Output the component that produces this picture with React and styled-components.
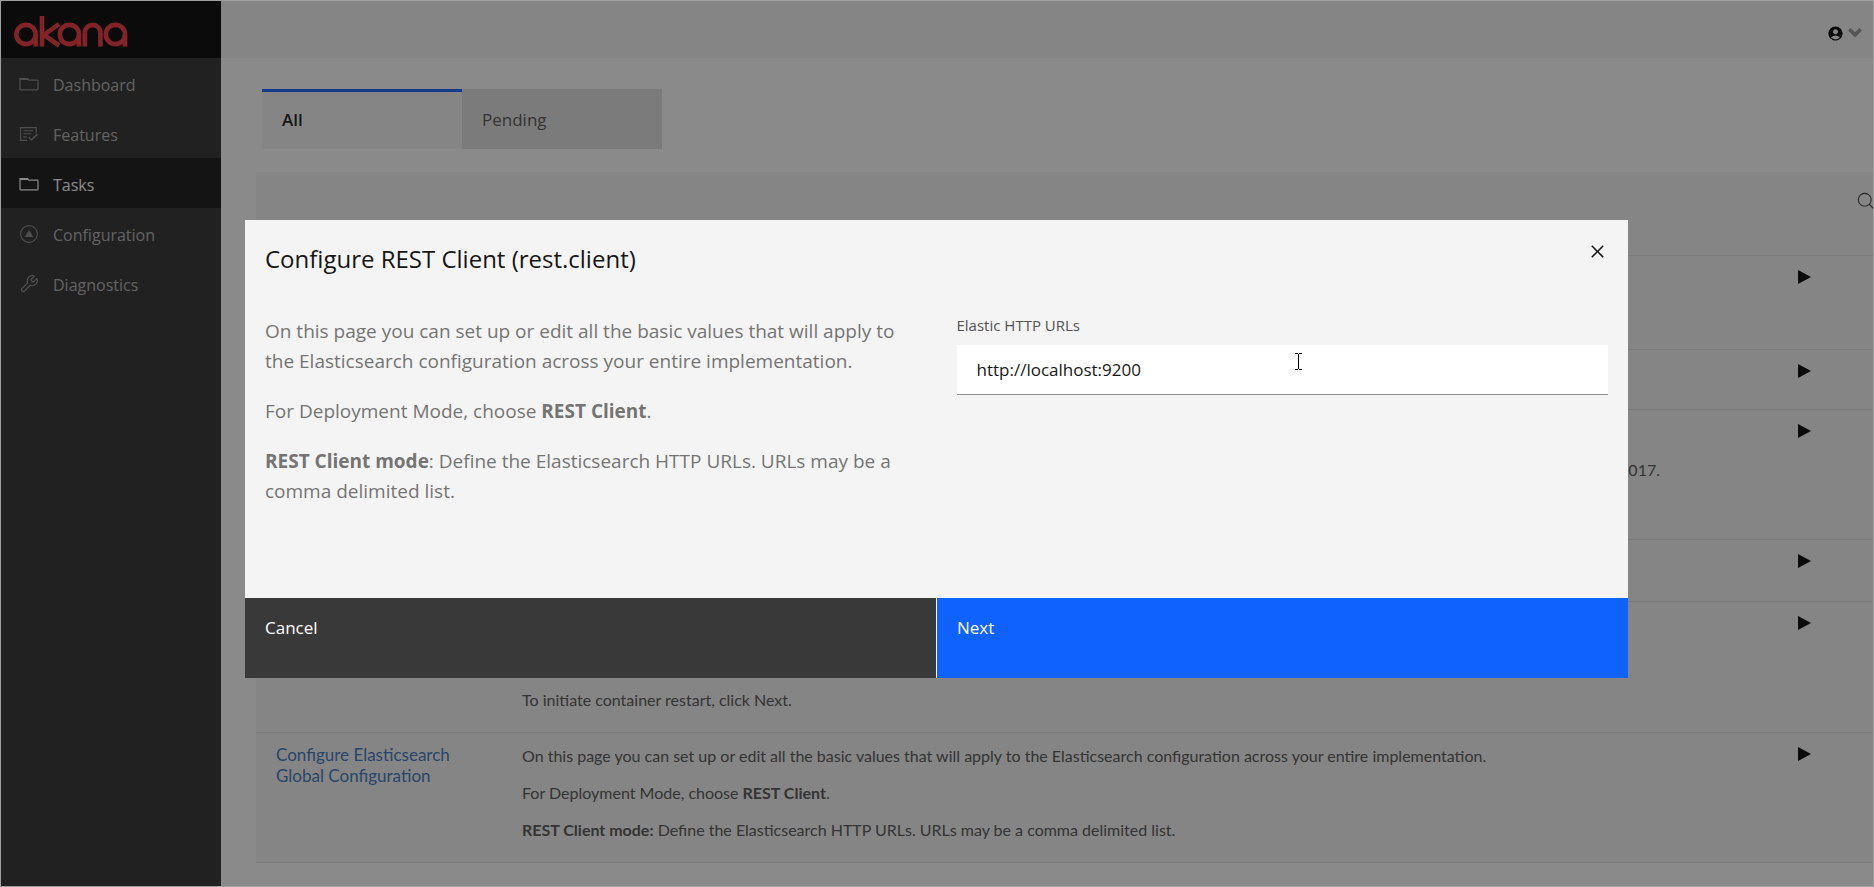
import React, { useState } from 'react';
import styled, { createGlobalStyle } from 'styled-components';
import { MdAccountCircle } from 'react-icons/md';
import { LuWrench } from 'react-icons/lu';

const GlobalStyle = createGlobalStyle`
    * {
        box-sizing: border-box;
    }

    body {
        margin: 0;
        font-family: 'Open Sans', 'Noto Sans', sans-serif;
        background: #fff;
    }

    button {
        font-family: inherit;
        border: none;
        cursor: pointer;
    }
`;

const FolderIcon = () => (
    <svg width='20' height='20' viewBox='0 0 20 20' fill='none' stroke='currentColor' strokeWidth='1.2'>
        <path d='M1 15V4.6h7.4l1.4 1.6h8.4c.5 0 .8.3.8.8v8c0 .6-.3.9-.8.9H1.9c-.6 0-.9-.3-.9-.9z' />
        <path d='M1.4 5.4h8' />
    </svg>
);

const FeaturesIcon = () => (
    <svg width='20' height='20' viewBox='0 0 20 20' fill='none' stroke='currentColor' strokeWidth='1.1'>
        <path d='M8 16.4H1.6V3.6h15.6v6' />
        <path d='M4.4 6.7h9.6M4.4 9.8h8M4.4 12.9h3.4' />
        <path d='M9.8 13.2l2.6 2.6 6-5.4' strokeWidth='1.5' />
    </svg>
);

const ConfigurationIcon = () => (
    <svg width='20' height='20' viewBox='0 0 20 20' fill='none' stroke='currentColor' strokeWidth='1.1'>
        <circle cx='10' cy='10' r='8.4' />
        <path d='M10 6l4.4 7H5.6z' fill='currentColor' stroke='none' />
    </svg>
);

const DiagnosticsIcon = () => <LuWrench size={20} strokeWidth={1.4} />;

const Logo = () => (
    <svg width='116' height='34' viewBox='0 0 116 34' fill='none' stroke='#f03038' strokeWidth='4.6' role='img' aria-label='akana'>
        <circle cx='13' cy='20.5' r='9.6' />
        <line x1='22.6' y1='20.5' x2='22.6' y2='32.5' />
        <line x1='29' y1='2' x2='29' y2='32.5' />
        <polyline points='46,10 31,21 46,31.5' />
        <circle cx='56.4' cy='20.5' r='9.6' />
        <line x1='66' y1='20.5' x2='66' y2='32.5' />
        <circle cx='79.6' cy='18.7' r='7.8' pathLength='2' strokeDasharray='1 1' strokeDashoffset='1' />
        <line x1='71.8' y1='18.5' x2='71.8' y2='32.5' />
        <line x1='87.4' y1='18.5' x2='87.4' y2='32.5' />
        <circle cx='102.4' cy='20.5' r='9.6' />
        <line x1='112' y1='20.5' x2='112' y2='32.5' />
    </svg>
);

const navItems = [
    { label: 'Dashboard', icon: <FolderIcon /> },
    { label: 'Features', icon: <FeaturesIcon /> },
    { label: 'Tasks', icon: <FolderIcon />, active: true },
    { label: 'Configuration', icon: <ConfigurationIcon /> },
    { label: 'Diagnostics', icon: <DiagnosticsIcon /> },
];

const tasks = [
    { id: 1, height: 94 },
    { id: 2, height: 60 },
    { id: 3, height: 130, valign: 'middle', align: 'right', text: ['2017.'] },
    { id: 4, height: 62 },
    { id: 5, height: 131, valign: 'bottom', text: ['To initiate container restart, click Next.'] },
    {
        id: 6,
        height: 130,
        name: 'Configure Elasticsearch Global Configuration',
        text: [
            'On this page you can set up or edit all the basic values that will apply to the Elasticsearch configuration across your entire implementation.',
            <>For Deployment Mode, choose <b>REST Client</b>.</>,
            <><b>REST Client mode:</b> Define the Elasticsearch HTTP URLs. URLs may be a comma delimited list.</>,
        ],
    },
];

const App = () => {
    const [tab, setTab] = useState('All');
    const [urls, setUrls] = useState('http://localhost:9200');

    return (
        <Shell>
            <GlobalStyle />
            {/* sidebar start */}
            <Sidebar>
                <LogoBar>
                    <Logo />
                </LogoBar>
                <nav>
                    {navItems.map(({ label, icon, active }) => (
                        <NavItem key={label} href='#' $active={active}>
                            {icon}
                            <span>{label}</span>
                        </NavItem>
                    ))}
                </nav>
            </Sidebar>
            {/* sidebar end */}

            {/* tasks page start */}
            <Page>
                <TopBar>
                    <UserButton type='button' aria-label='Account'>
                        <MdAccountCircle size={17} />
                        <svg width='14' height='12' viewBox='0 0 14 12'>
                            <path d='M2.6 0L7 4.2 11.4 0 14 2.6 7 9.6 0 2.6z' fill='#969696' />
                        </svg>
                    </UserButton>
                </TopBar>
                <Tabs role='tablist'>
                    {['All', 'Pending'].map((name) => (
                        <Tab
                            key={name}
                            type='button'
                            role='tab'
                            aria-selected={tab === name}
                            $active={tab === name}
                            onClick={() => setTab(name)}
                        >
                            {name}
                        </Tab>
                    ))}
                </Tabs>
                <TableArea>
                    <Toolbar>
                        <SearchButton type='button' aria-label='Search'>
                            <svg width='20' height='20' viewBox='0 0 32 32' fill='currentColor'>
                                <path d='M30 28.6L22.4 21A11 11 0 1 0 21 22.4L28.6 30zM4.6 14a9.4 9.4 0 1 1 9.4 9.4A9.4 9.4 0 0 1 4.6 14z' />
                            </svg>
                        </SearchButton>
                    </Toolbar>
                    <TaskTable>
                        <colgroup>
                            <NameCol />
                            <col />
                            <RunCol />
                        </colgroup>
                        <tbody>
                            {tasks.map(({ id, name, text = [], height, valign, align }) => (
                                <TaskRow key={id} $height={height}>
                                    <TaskCell>{name && <TaskLink href='#'>{name}</TaskLink>}</TaskCell>
                                    <DescriptionCell $valign={valign} $align={align}>
                                        {text.map((line, i) => <p key={i}>{line}</p>)}
                                    </DescriptionCell>
                                    <TaskCell>
                                        <RunButton type='button' aria-label='Run task'>
                                            <svg width='13' height='14' viewBox='0 0 13 14'>
                                                <path d='M0 0l13 7-13 7z' fill='currentColor' />
                                            </svg>
                                        </RunButton>
                                    </TaskCell>
                                </TaskRow>
                            ))}
                        </tbody>
                    </TaskTable>
                </TableArea>
            </Page>
            {/* tasks page end */}

            {/* modal start */}
            <Overlay>
                <Modal role='dialog' aria-labelledby='modal-title'>
                    <ModalHeader>
                        <h2 id='modal-title'>Configure REST Client (rest.client)</h2>
                        <CloseButton type='button' aria-label='Close'>
                            <svg width='25' height='25' viewBox='0 0 32 32' fill='currentColor'>
                                <path d='M24 9.4L22.6 8 16 14.6 9.4 8 8 9.4l6.6 6.6L8 22.6 9.4 24l6.6-6.6 6.6 6.6 1.4-1.4-6.6-6.6z' />
                            </svg>
                        </CloseButton>
                    </ModalHeader>
                    <ModalBody>
                        <Help>
                            <p>
                                On this page you can set up or edit all the basic values that will apply to
                                the Elasticsearch configuration across your entire implementation.
                            </p>
                            <p>For Deployment Mode, choose <b>REST Client</b>.</p>
                            <p>
                                <b>REST Client mode</b>: Define the Elasticsearch HTTP URLs. URLs may be a
                                comma delimited list.
                            </p>
                        </Help>
                        <Field>
                            <label htmlFor='urls'>Elastic HTTP URLs</label>
                            <InputWrap>
                                <input id='urls' type='text' value={urls} onChange={(e) => setUrls(e.target.value)} />
                                <Caret width='7' height='17' viewBox='0 0 7 17' fill='none' stroke='#000'>
                                    <path d='M0 .5h3M4 .5h3M3.5 1v15M0 16.5h3M4 16.5h3' />
                                </Caret>
                            </InputWrap>
                        </Field>
                    </ModalBody>
                    <ModalFooter>
                        <FooterButton type='button'>Cancel</FooterButton>
                        <FooterButton type='button' $primary>Next</FooterButton>
                    </ModalFooter>
                </Modal>
            </Overlay>
            {/* modal end */}
        </Shell>
    );
};

const Shell = styled.div`
    position: relative;
    display: grid;
    grid-template-columns: 220px 1fr;
    min-height: 100vh;
    border: 1px solid #a0a0a0;
    overflow: hidden;
`;

// ** sidebar **
const Sidebar = styled.aside`
    background: #2c2c2c;
`;

const LogoBar = styled.div`
    height: 57px;
    padding: 13px 12px 0;
    background: #000;
`;

const NavItem = styled.a`
    display: flex;
    align-items: center;
    gap: 14px;
    height: 50px;
    padding: 2px 18px 0;
    font-size: 16px;
    text-decoration: none;
    color: ${({ $active }) => ($active ? '#fff' : '#b0b0b0')};
    background: ${({ $active }) => ($active ? '#121212' : 'transparent')};

    svg {
        opacity: ${({ $active }) => ($active ? 1 : 0.7)};
    }

    span {
        padding-top: 1px;
    }
`;

// ** page **
const Page = styled.main`
    min-width: 0;
    background: #fff;
`;

const TopBar = styled.header`
    display: flex;
    justify-content: flex-end;
    align-items: center;
    height: 57px;
    padding: 8px 11px 0 0;
    background: #f4f4f4;
`;

const UserButton = styled.button`
    display: flex;
    align-items: center;
    gap: 4px;
    padding: 0;
    color: #000;
    background: none;
`;

const Tabs = styled.div`
    display: flex;
    padding: 31px 41px 23px;
`;

const Tab = styled.button`
    width: 200px;
    height: 60px;
    padding: 0 20px 3px;
    border-top: 3px solid ${({ $active }) => ($active ? '#0f62fe' : '#e0e0e0')};
    font-size: 17px;
    font-weight: ${({ $active }) => ($active ? 600 : 400)};
    text-align: left;
    color: ${({ $active }) => ($active ? '#161616' : '#525252')};
    background: ${({ $active }) => ($active ? '#f4f4f4' : '#e0e0e0')};
`;

const TableArea = styled.section`
    margin: 0 -21px 0 35px;
    font-family: Lato, 'Open Sans', sans-serif;
    background: #f4f4f4;
`;

const Toolbar = styled.div`
    display: flex;
    justify-content: flex-end;
    height: 83px;
    padding: 19px 18px 0 0;
`;

const SearchButton = styled.button`
    height: 20px;
    padding: 0;
    color: #393939;
    background: none;
`;

const TaskTable = styled.table`
    width: 100%;
    table-layout: fixed;
    border-collapse: collapse;
    border-bottom: 1px solid #e0e0e0;
`;

const NameCol = styled.col`
    width: 246px;
`;

const RunCol = styled.col`
    width: 116px;
`;

const TaskRow = styled.tr`
    height: ${({ $height }) => $height}px;
    border-top: 1px solid #e0e0e0;
`;

const TaskCell = styled.td`
    padding: 11px 20px 22px;
    font-size: 16px;
    line-height: 21px;
    vertical-align: ${({ $valign }) => $valign || 'top'};
    text-align: ${({ $align }) => $align || 'left'};
    color: #525252;
`;

const DescriptionCell = styled(TaskCell)`
    padding: 12px 118px 22px 20px;

    p {
        margin: 0;
    }

    p + p {
        margin-top: 16px;
    }
`;

const TaskLink = styled.a`
    font-size: 17px;
    text-decoration: none;
    color: #3a74bc;
`;

const RunButton = styled.button`
    display: block;
    padding: 3px 0;
    color: #000;
    background: none;

    svg {
        display: block;
    }
`;

// ** modal **
const Overlay = styled.div`
    position: absolute;
    inset: 0;
    display: flex;
    justify-content: center;
    align-items: center;
    padding: 11px 245px 0 244px;
    background: rgba(22, 22, 22, 0.5);
`;

const Modal = styled.div`
    flex: 1;
    background: #f4f4f4;
`;

const ModalHeader = styled.div`
    display: flex;
    justify-content: space-between;

    h2 {
        margin: 0;
        padding: 22px 20px 0;
        font-size: 24px;
        font-weight: 400;
        line-height: 34px;
        color: #161616;
    }
`;

const CloseButton = styled.button`
    display: grid;
    place-items: center;
    width: 62px;
    height: 62px;
    color: #161616;
    background: none;
`;

const ModalBody = styled.div`
    display: grid;
    grid-template-columns: 1fr 1fr;
    padding: 34px 0 92px;
`;

const Help = styled.div`
    padding: 0 20px;
    font-size: 19px;
    line-height: 30px;
    color: #747474;

    p {
        margin: 0 0 20px;
    }

    p:last-child {
        margin-bottom: 0;
    }
`;

const Field = styled.div`
    padding: 0 20px;

    label {
        display: block;
        font-size: 15px;
        line-height: 18px;
        color: #525252;
    }
`;

const InputWrap = styled.div`
    position: relative;
    margin-top: 11px;

    input {
        width: 100%;
        height: 50px;
        padding: 0 20px;
        border: none;
        border-bottom: 1px solid #8d8d8d;
        outline: none;
        font-family: inherit;
        font-size: 17px;
        color: #161616;
        background: #fff;
    }
`;

// text cursor hovering over the input
const Caret = styled.svg`
    position: absolute;
    top: 8px;
    left: 52%;
`;

const ModalFooter = styled.div`
    display: grid;
    grid-template-columns: 1fr 1fr;
    gap: 1px;
    height: 80px;
`;

const FooterButton = styled.button`
    padding: 18px 20px;
    font-size: 17px;
    line-height: 24px;
    text-align: left;
    display: flex;
    color: #fff;
    background: ${({ $primary }) => ($primary ? '#0f62fe' : '#393939')};
`;

export default App;
